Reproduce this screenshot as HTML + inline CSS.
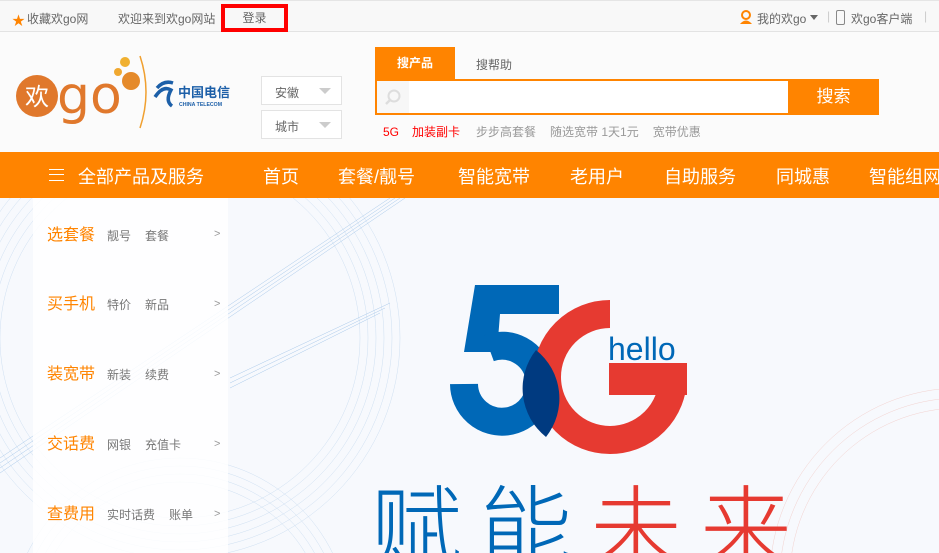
<!DOCTYPE html>
<html><head><meta charset="utf-8"><style>
*{margin:0;padding:0;box-sizing:border-box}
html,body{width:939px;height:553px;overflow:hidden}
body{background:#fbfbfb;font-family:"Liberation Sans","Noto Sans CJK SC",sans-serif;position:relative}
.a{position:absolute;white-space:nowrap}
.top{position:absolute;left:0;top:0;width:939px;height:32px;border-top:1px solid #e5e5e5;border-bottom:1px solid #e3e3e3;background:#f8f8f8;font-size:12px;color:#666}
.nav{position:absolute;left:0;top:152px;width:939px;height:46px;background:#ff8400;color:#fff;font-size:18px}
.menu{position:absolute;left:33px;top:198px;width:195px;height:355px;background:rgba(255,255,255,.85)}
.mi{position:absolute;left:14px;font-size:14px;color:#999;line-height:20px}
.mi b{font-weight:normal;color:#ff8400;font-size:16px;margin-right:12px}
.mi span{margin-right:14px;font-size:12px;color:#777}
.gt{position:absolute;left:181px;font-size:11px;color:#999}
</style></head><body>
<div class="top">
<span class="a" style="left:12px;top:9px;color:#ff8400;font-size:13px">★</span>
<span class="a" style="left:27px;top:9px">收藏欢go网</span>
<span class="a" style="left:118px;top:9px">欢迎来到欢go网站</span>
<div class="a" style="left:221px;top:3px;width:67px;height:28px;border:4px solid #f00;background:#f8f8f8;text-align:center;line-height:20px">登录</div>
<svg class="a" style="left:740px;top:9px" width="12" height="14"><circle cx="6" cy="5" r="4" fill="none" stroke="#ff8400" stroke-width="2"/><path d="M0 14 Q6 7 12 14Z" fill="#ff8400"/></svg>
<span class="a" style="left:757px;top:9px">我的欢go</span>
<svg class="a" style="left:810px;top:14px" width="8" height="5"><path d="M0 0H8L4 5Z" fill="#666"/></svg>
<span class="a" style="left:827px;top:8px;color:#ccc">|</span>
<div class="a" style="left:836px;top:9px;width:9px;height:15px;border:1px solid #888;border-radius:2px"></div>
<span class="a" style="left:851px;top:9px">欢go客户端</span>
<span class="a" style="left:924px;top:8px;color:#ccc">|</span>
</div>
<svg class="a" style="left:0;top:45px" width="240" height="100">
<circle cx="37" cy="51" r="21" fill="#e0782c"/>
<text x="37" y="60" font-size="24" fill="#fff" text-anchor="middle" font-family="Noto Sans CJK SC">欢</text>
<text x="57" y="68" font-size="52" fill="#e0782c" font-family="DejaVu Sans">go</text>
<circle cx="125" cy="17" r="5" fill="#f0b030"/><circle cx="118" cy="27" r="4" fill="#f0a830"/><circle cx="131" cy="36" r="9" fill="#e58a2a"/>
<path d="M140 11 Q152 47 140 83" stroke="#f0a030" stroke-width="1.5" fill="none"/>
<path d="M157 43 Q164 35 173 38 M155 52 Q163 40 171 45 Q165 56 172 61" stroke="#1c5fa8" stroke-width="3.5" fill="none"/>
<text x="178" y="52" font-size="13" font-weight="bold" fill="#1c5fa8" font-family="Noto Sans CJK SC">中国电信</text>
<text x="179" y="61" font-size="5.2" font-weight="bold" fill="#1c5fa8">CHINA TELECOM</text>
</svg>
<div class="a" style="left:261px;top:76px;width:81px;height:29px;border:1px solid #e3e3e3;background:#fff;font-size:12px;color:#666;padding:7px 13px">安徽<span style="position:absolute;right:10px;top:11px;border:6px solid transparent;border-top-color:#ccc"></span></div>
<div class="a" style="left:261px;top:110px;width:81px;height:29px;border:1px solid #e3e3e3;background:#fff;font-size:12px;color:#666;padding:7px 13px">城市<span style="position:absolute;right:10px;top:11px;border:6px solid transparent;border-top-color:#ccc"></span></div>
<div class="a" style="left:375px;top:47px;width:80px;height:33px;background:#ff8400;color:#fff;font-size:12px;font-weight:bold;text-align:center;line-height:33px">搜产品</div>
<span class="a" style="left:476px;top:56px;font-size:12px;color:#666">搜帮助</span>
<div class="a" style="left:375px;top:79px;width:504px;height:36px;border:2px solid #ff8400;background:#fff"></div>
<div class="a" style="left:377px;top:81px;width:32px;height:32px;background:#f7f7f7"></div>
<svg class="a" style="left:384px;top:88px" width="18" height="18"><circle cx="10" cy="8" r="5.5" fill="none" stroke="#ddd" stroke-width="2"/><path d="M6 12 L2 16" stroke="#ddd" stroke-width="2.5"/></svg>
<div class="a" style="left:788px;top:79px;width:91px;height:36px;background:#ff8400;color:#fff;font-size:17px;text-align:center;line-height:36px">搜索</div>
<div class="a" style="left:383px;top:123px;font-size:12px;color:#999"><span style="color:#f00;margin-right:13px">5G</span><span style="color:#f00;margin-right:16px">加装副卡</span><span style="margin-right:14px">步步高套餐</span><span style="margin-right:14px">随选宽带 1天1元</span>宽带优惠</div>
<div class="nav">
<div class="a" style="left:49px;top:17px;width:15px;height:12px;border-top:1.5px solid #fff;border-bottom:1.5px solid #fff"><div style="margin-top:4px;border-top:1.5px solid #fff"></div></div>
<span class="a" style="left:78px;top:11px">全部产品及服务</span>
<span class="a" style="left:263px;top:11px">首页</span>
<span class="a" style="left:338px;top:11px">套餐/靓号</span>
<span class="a" style="left:458px;top:11px">智能宽带</span>
<span class="a" style="left:570px;top:11px">老用户</span>
<span class="a" style="left:664px;top:11px">自助服务</span>
<span class="a" style="left:776px;top:11px">同城惠</span>
<span class="a" style="left:869px;top:11px">智能组网</span>
</div>
<div class="a" style="left:0;top:198px;width:939px;height:355px;background:#f7f9fd;overflow:hidden">
<svg width="939" height="355" style="position:absolute;left:0;top:0">
<g fill="none" stroke="#cfe0f2" stroke-width="0.5">
<circle cx="180" cy="140" r="220"/><circle cx="180" cy="140" r="212"/><circle cx="180" cy="140" r="204"/><circle cx="180" cy="140" r="196"/><circle cx="180" cy="140" r="188"/><circle cx="180" cy="140" r="180"/>
<circle cx="180" cy="430" r="170"/><circle cx="180" cy="430" r="162"/><circle cx="180" cy="430" r="154"/><circle cx="180" cy="430" r="146"/>
</g>
<g fill="none" stroke="#a9c9ea" stroke-width="0.5">
<path d="M0 260 L390 0 M0 265 L395 0 M0 270 L400 0 M0 275 L405 0 M230 190 L380 115 M230 185 L385 110 M230 180 L390 105"/>
</g>
<g fill="none" stroke="#f3d2cf" stroke-width="0.5"><circle cx="960" cy="380" r="190"/><circle cx="960" cy="380" r="180"/><circle cx="960" cy="380" r="170"/></g>
</svg>
</div>
<div class="menu">
<div class="mi" style="top:27px"><b>选套餐</b><span>靓号</span><span>套餐</span></div>
<div class="mi" style="top:96px"><b>买手机</b><span>特价</span><span>新品</span></div>
<div class="mi" style="top:166px"><b>装宽带</b><span>新装</span><span>续费</span></div>
<div class="mi" style="top:236px"><b>交话费</b><span>网银</span><span>充值卡</span></div>
<div class="mi" style="top:306px"><b>查费用</b><span>实时话费</span><span>账单</span></div>
<span class="gt" style="top:30px">&gt;</span><span class="gt" style="top:100px">&gt;</span><span class="gt" style="top:170px">&gt;</span><span class="gt" style="top:240px">&gt;</span><span class="gt" style="top:310px">&gt;</span>
</div>
<svg class="a" style="left:440px;top:280px" width="260" height="180">
<path d="M35 5 H119 V34 H60 L57 72 H24 Z" fill="#0068b7"/>
<path d="M49 68 A38 38 0 1 1 24 104" stroke="#0068b7" stroke-width="28" fill="none"/>
<path d="M170 34 A63 63 0 1 0 233 97" stroke="#e63a31" stroke-width="28" fill="none"/>
<rect x="169" y="83" width="78" height="32" fill="#e63a31"/>
<path d="M96 70 A62 62 0 0 1 106 157 A62 62 0 0 1 96 70 Z" fill="#003a80"/>
<text x="168" y="80" font-size="32" fill="#0068b7" font-family="Liberation Sans">hello</text>
</svg>
<div class="a" style="left:370px;top:468px;height:85px;overflow:hidden;font-size:92px;line-height:110px;color:#0068b7;letter-spacing:18px;font-family:'Noto Sans CJK SC',sans-serif;font-weight:300">赋能<span style="color:#e63a31">未来</span></div>
</body></html>
